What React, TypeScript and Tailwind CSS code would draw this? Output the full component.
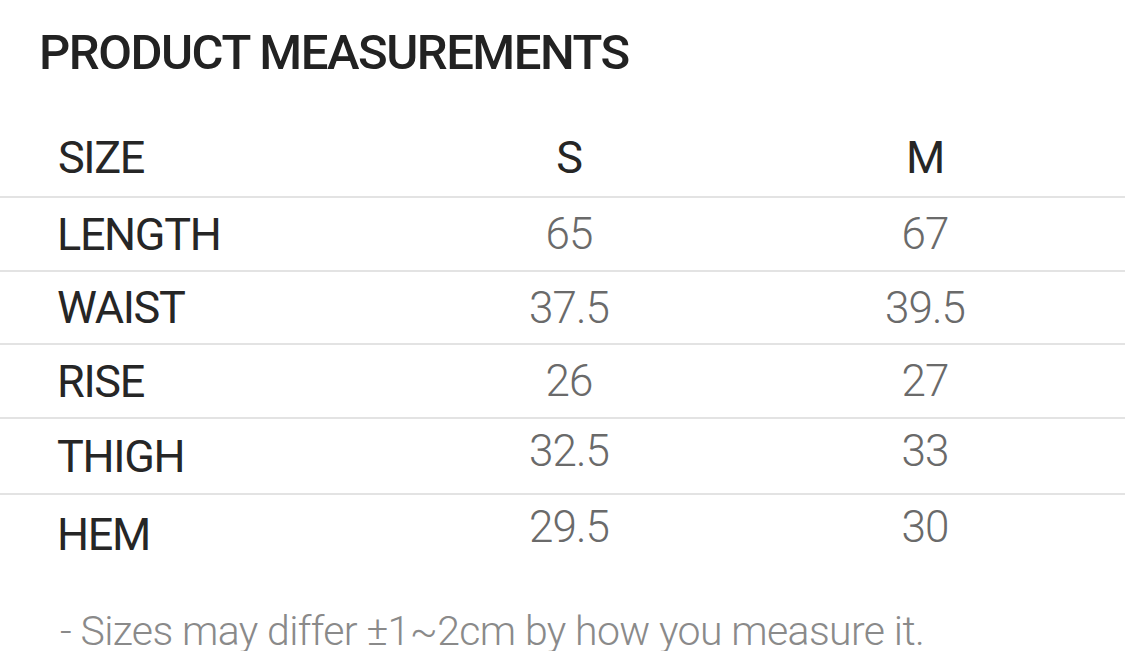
import React from "react";

interface Row {
  label: string;
  s: string;
  m: string;
  numPad?: string;
  height: string;
  last?: boolean;
}

const rows: Row[] = [
  { label: "LENGTH", s: "65", m: "67", height: "h-[74px]" },
  { label: "WAIST", s: "37.5", m: "39.5", height: "h-[73px]" },
  { label: "RISE", s: "26", m: "27", height: "h-[74px]" },
  { label: "THIGH", s: "32.5", m: "33", numPad: "pb-[10px]", height: "h-[76px]" },
  { label: "HEM", s: "29.5", m: "30", numPad: "pb-[14px]", height: "h-[78px]", last: true },
];

const App: React.FC = () => {
  return (
    <div className="w-[1125px] h-[651px] overflow-hidden bg-white font-['Roboto',sans-serif]">
      <div className="h-[104px] flex items-center pl-[39px]">
        <h1 className="text-[49px] leading-none font-medium text-[#222] tracking-[-0.03em]">
          PRODUCT MEASUREMENTS
        </h1>
      </div>

      {/* header row */}
      <div className="mt-[14px] h-[80px] grid grid-cols-[391px_356px_356px] items-center border-b-2 border-[#e3e3e3] text-[45px] leading-none text-[#262626] tracking-[-0.03em]">
        <div className="pl-[58px]">SIZE</div>
        <div className="text-center">S</div>
        <div className="text-center">M</div>
      </div>

      {rows.map((row) => (
        <div
          key={row.label}
          className={`${row.height} grid grid-cols-[391px_356px_356px] items-center ${
            row.last ? "" : "border-b-2 border-[#e3e3e3]"
          }`}
        >
          <div className="pl-[57px] text-[45px] leading-none text-[#262626] tracking-[-0.03em]">
            {row.label}
          </div>
          <div className={`text-center text-[44px] leading-none font-light text-[#6a6a6a] tracking-[-0.02em] ${row.numPad ?? ""}`}>
            {row.s}
          </div>
          <div className={`text-center text-[44px] leading-none font-light text-[#6a6a6a] tracking-[-0.02em] ${row.numPad ?? ""}`}>
            {row.m}
          </div>
        </div>
      ))}

      <p className="mt-[39px] pl-[60px] text-[41px] leading-[38px] font-light text-[#8a8a8a] tracking-[-0.015em] whitespace-nowrap">
        - Sizes may differ ±1~2cm by how you measure it.
      </p>
    </div>
  );
};

export default App;
